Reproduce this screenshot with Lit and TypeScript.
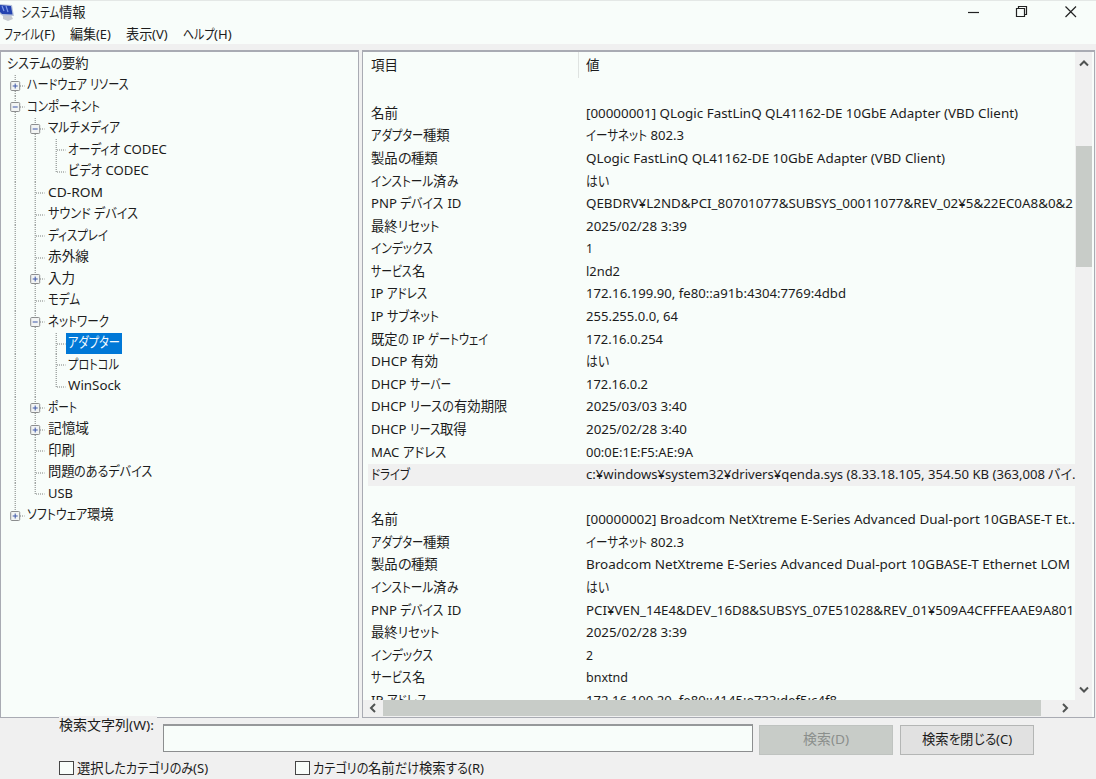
import { LitElement, html, css, svg, nothing } from "lit";
import { customElement, property } from "lit/decorators.js";
import { classMap } from "lit/directives/class-map.js";

type Run = { kind: "kana" | "kanji" | "latin"; text: string };

const splitRuns = (text: string): Run[] => {
  const runs: Run[] = [];
  for (const ch of text) {
    const kind = /[\u3040-\u30ff]/.test(ch) ? "kana" : /[\u3400-\u9fff]/.test(ch) ? "kanji" : "latin";
    const last = runs[runs.length - 1];
    if (last && last.kind === kind) last.text += ch;
    else runs.push({ kind, text: ch });
  }
  return runs;
};

/* A caption set to a known width: kana is condensed first, as in a narrow-kana UI face. */
@customElement("ui-label")
export class UiLabel extends LitElement {
  @property() text = "";
  @property({ type: Number }) w = 0;

  static styles = css`
    :host { display: block; flex: none; white-space: pre; line-height: 20px; height: 20px; }
    .line { display: flex; align-items: baseline; height: 20px; margin-top: -1px; }
    .line::before { content: "\\200b"; width: 0; font: 13.4px/20px "Noto Sans", sans-serif; }
    .run { display: inline-block; transform-origin: 0 50%; flex: none; }
    .latin { font: 13.4px/20px "Noto Sans", sans-serif; }
    .kanji { font: 13.6px/16px "Noto Sans CJK JP", sans-serif; }
    .kana { font: 13.6px/16px "Noto Sans CJK JP", sans-serif; font-feature-settings: "palt"; }
  `;

  updated() {
    const spans = [...this.renderRoot.querySelectorAll<HTMLElement>(".run")];
    const sizes = spans.map((s) => {
      s.style.transform = "";
      s.style.marginRight = "";
      return s.getBoundingClientRect().width;
    });
    const isKana = spans.map((s) => s.classList.contains("kana"));
    const sum = (want: boolean) => sizes.reduce((a, n, i) => (isKana[i] === want ? a + n : a), 0);
    const kana = sum(true);
    const other = sum(false);
    const otherScale = kana ? 0.98 : this.w / other;
    const kanaScale = kana ? (this.w - other * otherScale) / kana : 1;
    spans.forEach((s, i) => {
      const k = isKana[i] ? kanaScale : otherScale;
      s.style.transform = `scaleX(${k})`;
      s.style.marginRight = `${sizes[i] * (k - 1)}px`;
    });
  }

  render() {
    return html`<div class="line">${splitRuns(this.text).map((r) => html`<span class="run ${r.kind}">${r.text}</span>`)}</div>`;
  }
}

/* Guide codes: | line, t tee, l corner, + closed, - open, e closed and last. */
type Node = [guides: string, text: string, width: number, selected?: boolean];
const TREE: Node[] = [
  ["", "システムの要約", 82],
  ["+", "ハードウェア リソース", 102],
  ["-", "コンポーネント", 73],
  ["|-", "マルチメディア", 72],
  ["||t", "オーディオ CODEC", 99],
  ["||l", "ビデオ CODEC", 81],
  ["|t", "CD-ROM", 55],
  ["|t", "サウンド デバイス", 90],
  ["|t", "ディスプレイ", 60],
  ["|t", "赤外線", 41],
  ["|+", "入力", 27],
  ["|t", "モデム", 32],
  ["|-", "ネットワーク", 61],
  ["||t", "アダプター", 52, true],
  ["||t", "プロトコル", 51],
  ["||l", "WinSock", 53],
  ["|+", "ポート", 29],
  ["|+", "記憶域", 41],
  ["|t", "印刷", 27],
  ["|t", "問題のあるデバイス", 105],
  ["|l", "USB", 25],
  ["e", "ソフトウェア環境", 87],
];

type Row = [name: string, nameW: number, value: string, valueW: number, active?: boolean];
const ROWS: Row[] = [
  ["", 0, "", 0],
  ["名前", 27, "[00000001] QLogic FastLinQ QL41162-DE 10GbE Adapter (VBD Client)", 432],
  ["アダプター種類", 79, "イーサネット 802.3", 98],
  ["製品の種類", 67, "QLogic FastLinQ QL41162-DE 10GbE Adapter (VBD Client)", 359],
  ["インストール済み", 87, "はい", 23],
  ["PNP デバイス ID", 90, "QEBDRV¥L2ND&PCI_80701077&SUBSYS_00011077&REV_02¥5&22EC0A8&0&2", 487],
  ["最終リセット", 68, "2025/02/28 3:39", 101],
  ["インデックス", 62, "1", 7],
  ["サービス名", 54, "l2nd2", 34],
  ["IP アドレス", 56, "172.16.199.90, fe80::a91b:4304:7769:4dbd", 260],
  ["IP サブネット", 68, "255.255.0.0, 64", 92],
  ["既定の IP ゲートウェイ", 117, "172.16.0.254", 77],
  ["DHCP 有効", 67, "はい", 23],
  ["DHCP サーバー", 80, "172.16.0.2", 62],
  ["DHCP リースの有効期限", 136, "2025/03/03 3:40", 101],
  ["DHCP リース取得", 96, "2025/02/28 3:40", 101],
  ["MAC アドレス", 75, "00:0E:1E:F5:AE:9A", 107],
  ["ドライブ", 39, "c:¥windows¥system32¥drivers¥qenda.sys (8.33.18.105, 354.50 KB (363,008 バイ.", 490, true],
  ["", 0, "", 0],
  ["名前", 27, "[00000002] Broadcom NetXtreme E-Series Advanced Dual-port 10GBASE-T Et..", 489],
  ["アダプター種類", 79, "イーサネット 802.3", 98],
  ["製品の種類", 67, "Broadcom NetXtreme E-Series Advanced Dual-port 10GBASE-T Ethernet LOM", 484],
  ["インストール済み", 87, "はい", 23],
  ["PNP デバイス ID", 90, "PCI¥VEN_14E4&DEV_16D8&SUBSYS_07E51028&REV_01¥509A4CFFFEAAE9A801", 488],
  ["最終リセット", 68, "2025/02/28 3:39", 101],
  ["インデックス", 62, "2", 7],
  ["サービス名", 54, "bnxtnd", 42],
  ["IP アドレス", 56, "172.16.100.20, fe80::4145:e733:def5:c4f8", 251],
];

const label = (text: string, w: number) => (text ? html`<ui-label .text=${text} .w=${w}></ui-label>` : nothing);

@customElement("app-root")
export class AppRoot extends LitElement {
  static styles = css`
    :host { display: block; width: 1096px; height: 779px; overflow: hidden; color: #1c1c1c; background: #f0f0f0; }
    * { box-sizing: border-box; }
    svg { display: block; flex: none; }
    .window { display: flex; flex-direction: column; height: 779px; }
    .title { display: flex; align-items: center; height: 25px; border-top: 1px solid #e4e8e6; background: #f8fdfa; }
    .logo { width: 21px; margin-top: -1px; }
    .grow { flex: 1; }
    .controls { margin-top: -5px; }
    .menu { display: flex; height: 19px; background: #f8fdfa; padding-left: 4px; }
    .item { flex: none; }
    .file { width: 66px; }
    .edit { width: 56px; }
    .show { width: 57px; }
    .panes { display: grid; grid-template-columns: 359px 733px; gap: 3px; height: 668px; margin-top: 6px; }
    .pane { background: #f8fdfa; border: 1px solid #a9abb3; border-top-width: 2px; overflow: hidden; height: 668px; }
    .tree { padding: 1px 0 0 3.5px; }
    .node { display: flex; height: 21.5px; align-items: stretch; }
    .guide { width: 20.5px; flex: none; height: 21.5px; }
    .caption { display: flex; align-items: center; padding: 0 2px; height: 21.5px; }
    .root { padding-left: 2px; }
    .selected { background: #0078d7; color: #f4faff; }
    .list { display: grid; grid-template-columns: 1fr 17px; grid-template-rows: 1fr 17px; padding-right: 2px; background: #f8fdfa; }
    .view { overflow: hidden; padding-left: 5px; display: flex; flex-direction: column; }
    .head { display: flex; flex: none; height: 28px; }
    .headname { width: 211px; border-right: 1px solid #dfe3e1; height: 26px; padding: 4px 0 0 3px; }
    .headvalue { padding: 4px 0 0 7px; }
    .row { display: flex; align-items: center; flex: none; height: 22.59px; }
    .active { background: #f0f0f0; }
    .name { width: 215px; padding-left: 3px; flex: none; height: 20px; }
    .value { padding-left: 3px; flex: 1; min-width: 0; overflow: hidden; height: 20px; }
    .vbar { background: #f0f0f0; display: flex; flex-direction: column; align-items: center; justify-content: space-between; }
    .vtop { height: 94px; }
    .vthumb { width: 16px; height: 121px; background: #c8ccc8; }
    .vrest { flex: 1; display: flex; align-items: flex-end; }
    .hbar { background: #f0f0f0; display: flex; align-items: stretch; grid-column: 1 / 3; }
    .hthumb { width: 658px; margin-bottom: 1px; background: #c8ccc8; }
    .find { display: flex; flex: 1; background: #f0f0f0; padding-left: 59px; flex-direction: column; }
    .query { display: flex; height: 38px; }
    .querylabel { width: 98px; margin-top: -2px; height: 20px; background: #f0f0f0; }
    .field { width: 590px; height: 28px; margin: 6px 0 0 6px; border: 1px solid #8c8e8f; border-top: 2px solid #96989a; background: #f8fdfa; flex: none; }
    .button { display: flex; flex: none; align-items: center; justify-content: center; width: 134px; height: 30px; margin: 7px 0 0 6px; border: 1px solid #b4b6b5; background: #e1e1e1; }
    .button + .button { margin-left: 7px; }
    .disabled { background: #c8ccc8; border-color: #bfc3c0; color: #8b8f8c; }
    .checks { display: flex; margin-top: 3px; height: 20px; }
    .check { display: flex; align-items: center; width: 236px; gap: 3px; }
    .box { width: 15px; height: 14px; border: 1px solid #454545; background: #f8fdfa; margin-top: -3px; flex: none; }
  `;

  guide(code: string) {
    const box = "+-e".includes(code);
    const end = code === "l" || code === "e" ? 11 : 22;
    return html`<svg class="guide" width="20.5" height="21.5" viewBox="0 0 20.5 21.5">
      ${svg`<path d="M10.2 0V${end}" stroke="#7c807e" stroke-dasharray="1 1" fill="none"/>`}
      ${code === "|" ? nothing : svg`<path d="M11 11H19.5" stroke="#7c807e" stroke-dasharray="1 1" fill="none"/>`}
      ${box
        ? svg`<rect x="5.7" y="6.5" width="9" height="9" rx="1" fill="#f2f4f3" stroke="#8b8d8e"/>
          <path d="M7.7 11H12.7${code === "-" ? "" : "M10.2 8.5V13.5"}" stroke="#3d57a8" fill="none"/>`
        : nothing}
    </svg>`;
  }

  arrow(d: string, w: number, h: number) {
    return html`<svg width=${w} height=${h} viewBox="0 0 ${w} ${h}"><path d=${d} fill="none" stroke="#505352" stroke-width="2"/></svg>`;
  }

  render() {
    return html`<div class="window">
      <div class="title">
        <svg class="logo" width="21" height="24" viewBox="0 0 21 24">
          <path d="M3 15L11 14L13 18L8 20L3 18Z" fill="#c6cad0"/>
          <path d="M0 3L12 4L14 15L3 15L0 13Z" fill="#b9c4da"/>
          <path d="M0 4L11 5L12.5 13.5L2 13L0 11Z" fill="#2343b0"/>
          <path d="M2 5L4 10M6 5L8 11" stroke="#7f9ce8" stroke-width="1.2"/>
        </svg>
        ${label("システム情報", 65)}
        <div class="grow"></div>
        <svg class="controls" width="130" height="20" viewBox="0 0 130 20" fill="none" stroke="#222" stroke-width="1.2">
          <path d="M2 11.5H13"/>
          <path d="M50.5 7.5H58.5V15.5H50.5ZM52.5 7V5.5H60.5V13.5H59"/>
          <path d="M99.5 5.5L110 16M110 5.5L99.5 16"/>
        </svg>
      </div>
      <div class="menu">
        <div class="item file">${label("ファイル(F)", 51)}</div>
        <div class="item edit">${label("編集(E)", 41)}</div>
        <div class="item show">${label("表示(V)", 42)}</div>
        <div class="item">${label("ヘルプ(H)", 49)}</div>
      </div>
      <div class="panes">
        <div class="pane tree">
          ${TREE.map(
            ([guides, text, w, selected]) => html`<div class="node">
              ${[...guides].map((c) => this.guide(c))}
              <div class=${classMap({ caption: true, root: !guides, selected: !!selected })}>${label(text, w)}</div>
            </div>`
          )}
        </div>
        <div class="pane list">
          <div class="view">
            <div class="head">
              <div class="headname">${label("項目", 27)}</div>
              <div class="headvalue">${label("値", 13.5)}</div>
            </div>
            ${ROWS.map(
              ([n, nw, v, vw, active]) => html`<div class=${classMap({ row: true, active: !!active })}>
                <div class="name">${label(n, nw)}</div>
                <div class="value">${label(v, vw)}</div>
              </div>`
            )}
          </div>
          <div class="vbar">
            <div class="vtop">${this.arrow("M4 13.5L8 9.5L12 13.5", 16, 20)}</div>
            <div class="vthumb"></div>
            <div class="vrest">${this.arrow("M4 5.5L8 9.5L12 5.5", 16, 18)}</div>
          </div>
          <div class="hbar">
            ${this.arrow("M12 4L8 8L12 12", 20, 16)}
            <div class="hthumb"></div>
            <div class="grow"></div>
            ${this.arrow("M7 4L11 8L7 12", 36, 16)}
          </div>
        </div>
      </div>
      <div class="find">
        <div class="query">
          <div class="querylabel">${label("検索文字列(W):", 95)}</div>
          <div class="field"></div>
          <div class="button disabled">${label("検索(D)", 46)}</div>
          <div class="button">${label("検索を閉じる(C)", 90)}</div>
        </div>
        <div class="checks">
          <div class="check"><div class="box"></div>${label("選択したカテゴリのみ(S)", 131)}</div>
          <div class="check"><div class="box"></div>${label("カテゴリの名前だけ検索する(R)", 171)}</div>
        </div>
      </div>
    </div>`;
  }
}
